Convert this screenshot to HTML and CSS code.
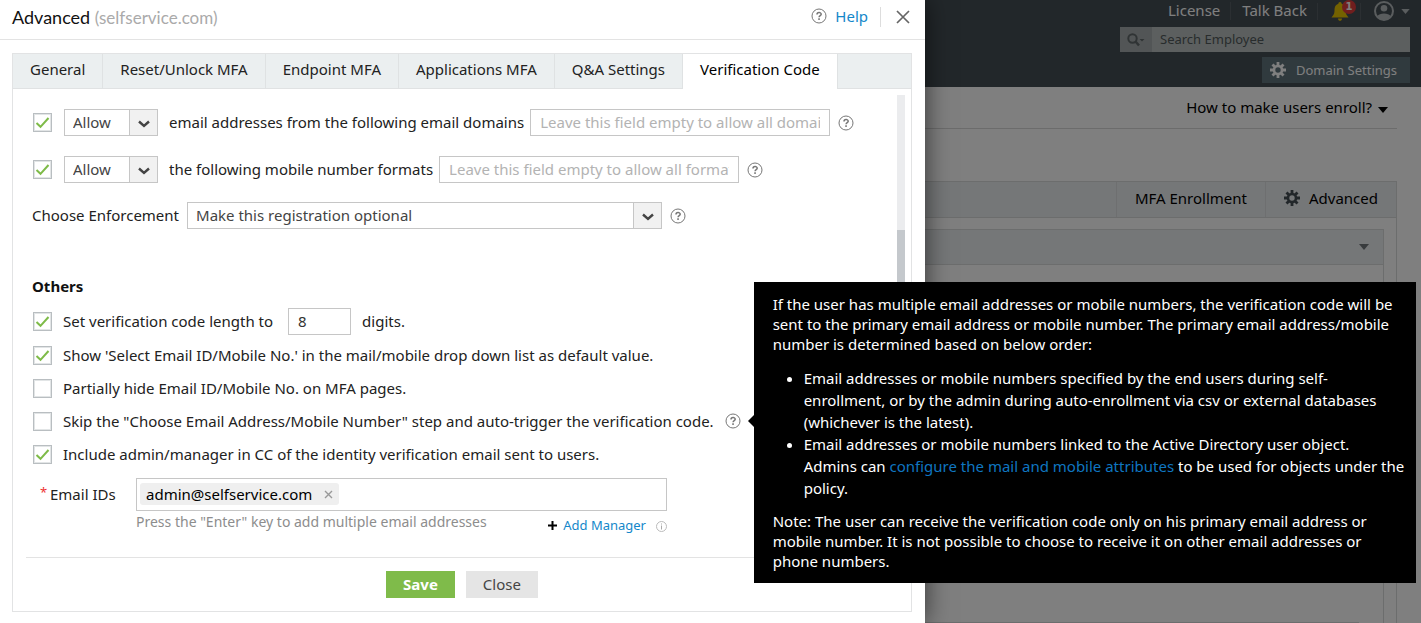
FILE: index.html
```html
<!DOCTYPE html>
<html lang="en">
<head>
<meta charset="utf-8">
<title>Advanced - Verification Code</title>
<meta name="viewport" content="width=device-width, initial-scale=1">
<link rel="stylesheet" href="styles.css">
</head>
<body>
<svg class="sprite" aria-hidden="true">
  <symbol id="help" viewBox="0 0 16 16"><circle cx="8" cy="8" r="7" fill="none" stroke="currentColor"/><path d="M6 6.6C6 4 10.2 4 10.2 6.3C10.2 7.7 8.1 7.6 8.1 9.3" fill="none" stroke="currentColor" stroke-width="1.5"/><rect x="7.2" y="10.3" width="1.7" height="1.6" fill="currentColor"/></symbol>
  <symbol id="gear" viewBox="0 0 16 16"><g fill="currentColor"><path d="M6.6 0h2.8v4H6.6zM6.6 12h2.8v4H6.6zM0 6.6h4v2.8H0zM12 6.6h4v2.8h-4z"/><path transform="rotate(45 8 8)" d="M6.6 .2h2.8v4H6.6zM6.6 11.8h2.8v4H6.6zM.2 6.6h4v2.8h-4zM11.8 6.6h4v2.8h-4z"/></g><circle cx="8" cy="8" r="4" fill="none" stroke="currentColor" stroke-width="2.6"/></symbol>
  <symbol id="chevron" viewBox="0 0 12 8"><path d="M1 1.5L6 6L11 1.5" fill="none" stroke="currentColor" stroke-width="2.4"/></symbol>
  <symbol id="caret" viewBox="0 0 10 6"><path d="M0 0h10L5 6z" fill="currentColor"/></symbol>
</svg>

<div class="page">
  <header class="topbar">
    <nav class="links">
      <a href="#">License</a>
      <a href="#">Talk Back</a>
      <button class="bell" type="button" aria-label="Notifications">
        <svg width="18" height="19" viewBox="0 0 18 19"><path d="M9 0C7.900 0 7.400.8 7.400 1.700C4.500 2.500 3.500 5 3.500 8C3.500 12 2.500 13 .5 15.500H17.500C15.500 13 14.500 12 14.500 8C14.500 5 13.500 2.500 10.600 1.700C10.600.8 10.100 0 9 0zM7 16.500h4C11 19.600 7 19.600 7 16.500z" fill="#e8c400"/></svg>
        <span class="badge">1</span>
      </button>
      <button class="user" type="button" aria-label="Account">
        <svg width="20" height="20" viewBox="0 0 20 20"><circle cx="10" cy="10" r="9" fill="none" stroke="currentColor" stroke-width="2"/><circle cx="10" cy="7.300" r="3.300" fill="currentColor"/><path d="M3.500 15C5 11.500 15 11.500 16.500 15L14 18H6z" fill="currentColor"/></svg>
        <svg width="9" height="5"><use href="#caret"/></svg>
      </button>
    </nav>
    <div class="search">
      <button type="button" aria-label="Search scope">
        <svg width="18" height="14" viewBox="0 0 18 14"><circle cx="5.500" cy="5.500" r="4.200" fill="none" stroke="currentColor" stroke-width="2"/><path d="M8.500 8.500L12 12.500" stroke="currentColor" stroke-width="2.500"/><path d="M12.500 6h5L15 8.500z" fill="currentColor"/></svg>
      </button>
      <input type="text" placeholder="Search Employee" aria-label="Search Employee">
    </div>
    <button class="domain" type="button"><svg width="16" height="16"><use href="#gear"/></svg>Domain Settings</button>
  </header>
  <main class="main">
    <div class="howto"><button type="button">How to make users enroll? <svg width="10" height="6"><use href="#caret"/></svg></button></div>
    <section class="box">
      <nav class="box-tabs">
        <a href="#">MFA Enrollment</a>
        <a href="#"><svg width="16" height="16"><use href="#gear"/></svg>Advanced</a>
      </nav>
      <div class="card">
        <div class="card-head"><svg width="10" height="6"><use href="#caret"/></svg></div>
        <div class="card-line"></div>
      </div>
    </section>
  </main>
</div>

<div class="overlay">
  <section class="drawer" role="dialog" aria-labelledby="title">
    <header class="drawer-head">
      <h1 id="title">Advanced <span>(selfservice.com)</span></h1>
      <a class="help-link" href="#"><svg class="help" width="16" height="16"><use href="#help"/></svg>Help</a>
      <button class="close" type="button" aria-label="Close panel"><svg width="14" height="14" viewBox="0 0 14 14"><path d="M1 1L13 13M13 1L1 13" stroke="currentColor" stroke-width="1.700"/></svg></button>
    </header>
    <div class="panel">
      <nav class="tabs">
        <a href="#">General</a>
        <a href="#">Reset/Unlock MFA</a>
        <a href="#">Endpoint MFA</a>
        <a href="#">Applications MFA</a>
        <a href="#">Q&amp;A Settings</a>
        <a href="#" class="active" aria-current="page">Verification Code</a>
      </nav>
      <form class="body">
        <div class="fields">
          <div class="row restrict">
            <input type="checkbox" checked aria-label="Restrict email domains">
            <span class="select short"><select id="mail-rule"><option>Allow</option></select><svg width="12" height="8"><use href="#chevron"/></svg></span>
            <label for="mail-rule">email addresses from the following email domains</label>
            <input class="text wide" type="text" placeholder="Leave this field empty to allow all domains" aria-label="Email domains">
            <svg class="help" width="16" height="16"><use href="#help"/></svg>
          </div>
          <div class="row restrict">
            <input type="checkbox" checked aria-label="Restrict mobile formats">
            <span class="select short"><select id="mobile-rule"><option>Allow</option></select><svg width="12" height="8"><use href="#chevron"/></svg></span>
            <label for="mobile-rule">the following mobile number formats</label>
            <input class="text wide" type="text" placeholder="Leave this field empty to allow all formats" aria-label="Mobile number formats">
            <svg class="help" width="16" height="16"><use href="#help"/></svg>
          </div>
          <div class="row enforce">
            <label for="enforce">Choose Enforcement</label>
            <span class="select long"><select id="enforce"><option>Make this registration optional</option></select><svg width="12" height="8"><use href="#chevron"/></svg></span>
            <svg class="help" width="16" height="16"><use href="#help"/></svg>
          </div>
          <h2>Others</h2>
          <div class="row length">
            <input type="checkbox" id="len" checked>
            <label for="len">Set verification code length to</label>
            <input class="text digits" type="text" value="8" aria-label="Code length">
            <span>digits.</span>
          </div>
          <div class="options">
            <label class="option"><input type="checkbox" checked>Show 'Select Email ID/Mobile No.' in the mail/mobile drop down list as default value.</label>
            <label class="option"><input type="checkbox">Partially hide Email ID/Mobile No. on MFA pages.</label>
            <div class="option">
              <label class="option"><input type="checkbox">Skip the "Choose Email Address/Mobile Number" step and auto-trigger the verification code.</label>
              <div class="tip-anchor">
                <svg class="help" width="16" height="16"><use href="#help"/></svg>
                <div class="tip" role="tooltip">
                  <p>If the user has multiple email addresses or mobile numbers, the verification code will be sent to the primary email address or mobile number. The primary email address/mobile number is determined based on below order:</p>
                  <ul>
                    <li>Email addresses or mobile numbers specified by the end users during self-<br>enrollment, or by the admin during auto-enrollment via csv or external databases (whichever is the latest).</li>
                    <li>Email addresses or mobile numbers linked to the Active Directory user object.<br>Admins can <a href="#">configure the mail and mobile attributes</a> to be used for objects under the policy.</li>
                  </ul>
                  <p>Note: The user can receive the verification code only on his primary email address or mobile number. It is not possible to choose to receive it on other email addresses or phone numbers.</p>
                </div>
              </div>
            </div>
            <label class="option"><input type="checkbox" checked>Include admin/manager in CC of the identity verification email sent to users.</label>
          </div>
          <div class="emails">
            <label for="emails"><span class="star">*</span>Email IDs</label>
            <div class="email-col">
              <div class="chips">
                <span class="chip">admin@selfservice.com<button type="button" aria-label="Remove"><svg width="9" height="9" viewBox="0 0 9 9"><path d="M1 1L8 8M8 1L1 8" stroke="currentColor" stroke-width="1.400"/></svg></button></span>
                <input id="emails" type="text">
              </div>
              <div class="under">
                <small>Press the "Enter" key to add multiple email addresses</small>
                <a href="#"><svg width="9" height="9" viewBox="0 0 9 9"><path d="M4.500 0v9M0 4.500h9" stroke="#000" stroke-width="2"/></svg>Add Manager</a>
                <svg class="info" width="11" height="11" viewBox="0 0 11 11"><circle cx="5.500" cy="5.500" r="5" fill="none" stroke="#bbb"/><path d="M5.500 4.500v4M5.500 2.500v1" stroke="#aaa"/></svg>
              </div>
            </div>
          </div>
        </div>
        <div class="track"><div class="thumb"></div></div>
      </form>
      <footer class="actions">
        <button class="save" type="button">Save</button>
        <button class="cancel" type="button">Close</button>
      </footer>
    </div>
  </section>
</div>
</body>
</html>
```
FILE: styles.css
```css
* { box-sizing: border-box; }
body {
  margin: 0;
  position: relative;
  min-height: 100vh;
  overflow-x: hidden;
  color: #222;
  font: 15px/20px "Noto Sans", "Open Sans", sans-serif;
}
a { color: inherit; text-decoration: none; }
button, input, select { font: inherit; color: inherit; }
button { border: 0; padding: 0; background: none; cursor: pointer; }
svg { flex: none; }
.sprite { position: absolute; width: 0; height: 0; }

/* Page behind the drawer */
.page { min-height: 100vh; display: flex; flex-direction: column; background: #fff; }
.topbar {
  background: #454e54;
  color: #fff;
  display: flex;
  flex-direction: column;
  align-items: flex-end;
  gap: 5px;
  padding: 0 11px 4px;
}
.links { display: flex; align-items: center; height: 22px; }
.links > * { display: flex; align-items: center; }
.links > a { height: 18px; padding-bottom: 2px; }
.links > * + * { border-left: 1px solid #565f65; margin-left: 10px; padding-left: 11px; }
.links .bell { position: relative; height: 17px; padding: 0 11px 0 13px; }
.links .user { gap: 7px; margin-left: 0; padding-left: 13px; height: 17px; color: #b4babd; }
.badge {
  position: absolute;
  top: -3px;
  left: 24px;
  width: 14px;
  height: 14px;
  border-radius: 7px;
  background: #e03c3c;
  font: bold 10px/14px "DejaVu Sans", sans-serif;
}
.search { display: flex; width: 290px; height: 25px; background: #b9bfbe; }
.search button { width: 32px; color: #60686a; background: #a5abac; display: grid; place-items: center; }
.search input { flex: 1; min-width: 0; border: 0; padding: 0 8px 2px; background: none; font-size: 13px; }
.search input::placeholder { color: #50585a; }
.domain {
  display: flex;
  align-items: center;
  gap: 10px;
  height: 26px;
  padding: 0 13px 0 8px;
  background: #60747d;
  color: #fff;
  font-size: 13px;
}
.main { flex: 1; display: flex; flex-direction: column; padding: 0 24px 0 40px; color: #000; }
.howto { display: flex; justify-content: flex-end; height: 42px; padding: 0 9px 2px 0; border-bottom: 1px solid #d8d8d8; }
.howto svg { margin-left: 2px; }
.box { flex: 1; display: flex; flex-direction: column; margin-top: 52px; border: 1px solid #d8dadb; border-bottom: 0; }
.box-tabs { display: flex; justify-content: flex-end; height: 36px; background: #ebeef0; border-bottom: 1px solid #d8dadb; }
.box-tabs a { display: flex; align-items: center; gap: 9px; padding: 0 18px 4px; border-left: 1px solid #dcdfe1; }
.box-tabs svg { color: #454e54; }
.card { flex: 1; display: flex; flex-direction: column; margin: 11px 12px 0; border: 1px solid #d8dadb; border-bottom: 0; }
.card-head { display: flex; align-items: center; justify-content: flex-end; height: 35px; padding-right: 14px; color: #70777b; background: #ebeef0; border-bottom: 1px solid #d8dadb; }
.card-line { flex: 1; margin: 0 24px; border-bottom: 1px solid #d8dadb; }

/* Drawer */
.overlay { position: absolute; inset: 0; display: flex; padding-right: 496px; background: rgba(0, 0, 0, .5); }
.drawer { flex: 1; min-width: 0; display: flex; flex-direction: column; padding-bottom: 11px; background: #fff; box-shadow: 0 0 24px rgba(0, 0, 0, .6); }
.drawer-head { display: flex; align-items: center; height: 40px; padding: 0 15px 5px 12px; border-bottom: 1px solid #e3e3e3; }
.drawer-head h1 { flex: 1; margin: 0; font: 18px/22px Lato, sans-serif; color: #111; }
.drawer-head h1 span { color: #aaa; font-size: 17px; }
.help { color: #777; }
.help-link { display: flex; align-items: center; gap: 8px; padding-bottom: 2px; color: #1487ca; }
.close { display: flex; margin-left: 12px; padding: 3px 0 3px 15px; border-left: 1px solid #ddd; color: #666; }
.panel { flex: 1; display: flex; flex-direction: column; margin: 13px 13px 0 12px; border: 1px solid #e2e3e4; }
.tabs { display: flex; height: 35px; background: #ebeff0; box-shadow: inset 0 -1px #e0e2e3; }
.tabs a { padding: 5px 17px 0; border-right: 1px solid #dfe2e3; white-space: nowrap; }
.tabs .active { background: #fff; color: #000; }
.body { flex: 1; display: flex; padding: 6px 6px 0 19px; }
.fields { flex: 1; min-width: 0; padding-top: 14px; }
.track { width: 8px; margin-bottom: 16px; padding-top: 135px; background: #ebecee; }
.thumb { height: 200px; background: #c4c8cc; }
.row { display: flex; align-items: center; height: 27px; white-space: nowrap; }
.row label, .row > span:last-child { padding-bottom: 2px; }
.restrict { margin-bottom: 20px; }
.enforce { margin-top: -1px; }
input[type="checkbox"] {
  appearance: none;
  flex: none;
  width: 19px;
  height: 19px;
  margin: 0 0 0 1px;
  border: 1px solid #b9bec1;
  background: #fff center / 15px 15px no-repeat;
  box-shadow: inset 0 0 0 1px #e2e5e6;
}
input[type="checkbox"]:checked {
  background-image: url("data:image/svg+xml,%3Csvg xmlns='http://www.w3.org/2000/svg' viewBox='0 0 15 15'%3E%3Cpath d='M1.500 8L5.500 11.800L13.500 3' fill='none' stroke='%237ebb48' stroke-width='2'/%3E%3C/svg%3E");
}
.select { position: relative; display: flex; height: 27px; color: #444; }
.select select { appearance: none; width: 100%; height: 27px; padding: 0 8px 2px; border: 1px solid #c6c6c6; border-radius: 0; background: linear-gradient(to left, #f1f1f1 27px, #c6c6c6 27px, #c6c6c6 28px, #fff 28px); }
.select svg { position: absolute; right: 8px; top: 11px; pointer-events: none; }
.short { width: 94px; margin: 0 11px 0 12px; }
.long { width: 475px; margin: 0 8px; }
.text { height: 27px; padding: 0 9px 2px; border: 1px solid #c6c6c6; background: #fff; color: #333; }
.wide { width: 300px; margin: 0 8px 0 6px; }
.wide::placeholder { color: #b3b3b3; }
h2 { margin: 47px 0 12px; font-size: 15px; line-height: 20px; color: #111; }
.length label { margin-left: 11px; }
.digits { width: 63px; margin: 0 11px 0 15px; }
.options { margin-top: 4px; }
.option { display: flex; align-items: center; height: 33px; padding-bottom: 1px; white-space: nowrap; }
.option .option { padding-bottom: 0; }
.option input[type="checkbox"] { margin-right: 11px; }
.emails { display: flex; margin: 7px 0 0 8px; }
.emails > label { display: flex; width: 96px; padding-top: 6px; }
.star { width: 10px; color: #e33; font-size: 13px; line-height: 16px; }
.email-col { width: 531px; }
.chips { display: flex; align-items: center; height: 33px; padding: 0 3px 1px; border: 1px solid #c6c6c6; }
.chips input { flex: 1; min-width: 0; border: 0; outline: 0; background: none; }
.chip { display: flex; align-items: center; height: 22px; padding: 0 6px; border-radius: 3px; background: #efefef; color: #000; }
.chip button { display: flex; margin-left: 12px; color: #999; }
.under { display: flex; align-items: center; height: 26px; }
.under small { flex: 1; padding-bottom: 4px; font-size: 14px; color: #8d8d8d; }
.under a { display: flex; align-items: center; gap: 6px; padding-top: 2px; color: #1487ca; font-size: 13px; }
.under .info { margin: 4px 0 0 10px; }
.actions { display: flex; justify-content: center; gap: 11px; margin: 0 13px; padding: 13px 0; border-top: 1px solid #e3e3e3; }
.actions button { height: 27px; padding: 0 17px 2px; }
.save { background: #7fbb4a; color: #fff; font-weight: bold; }
.cancel { background: #e5e5e5; color: #444; }

/* Tooltip */
.tip-anchor { position: relative; display: flex; margin-left: 11px; }
.tip {
  position: absolute;
  left: 29px;
  top: -131px;
  z-index: 1;
  width: 662px;
  padding: 12px 6px 12px 19px;
  background: #000;
  color: #fff;
  white-space: normal;
}
.tip::before { content: ""; position: absolute; left: -6px; top: 133px; border: 6px solid transparent; border-left: 0; border-right-color: #000; }
.tip p { margin: 0; }
.tip ul { margin: 13px 0 12px; padding-left: 31px; line-height: 22px; }
.tip a { color: #0f76c0; }
```
